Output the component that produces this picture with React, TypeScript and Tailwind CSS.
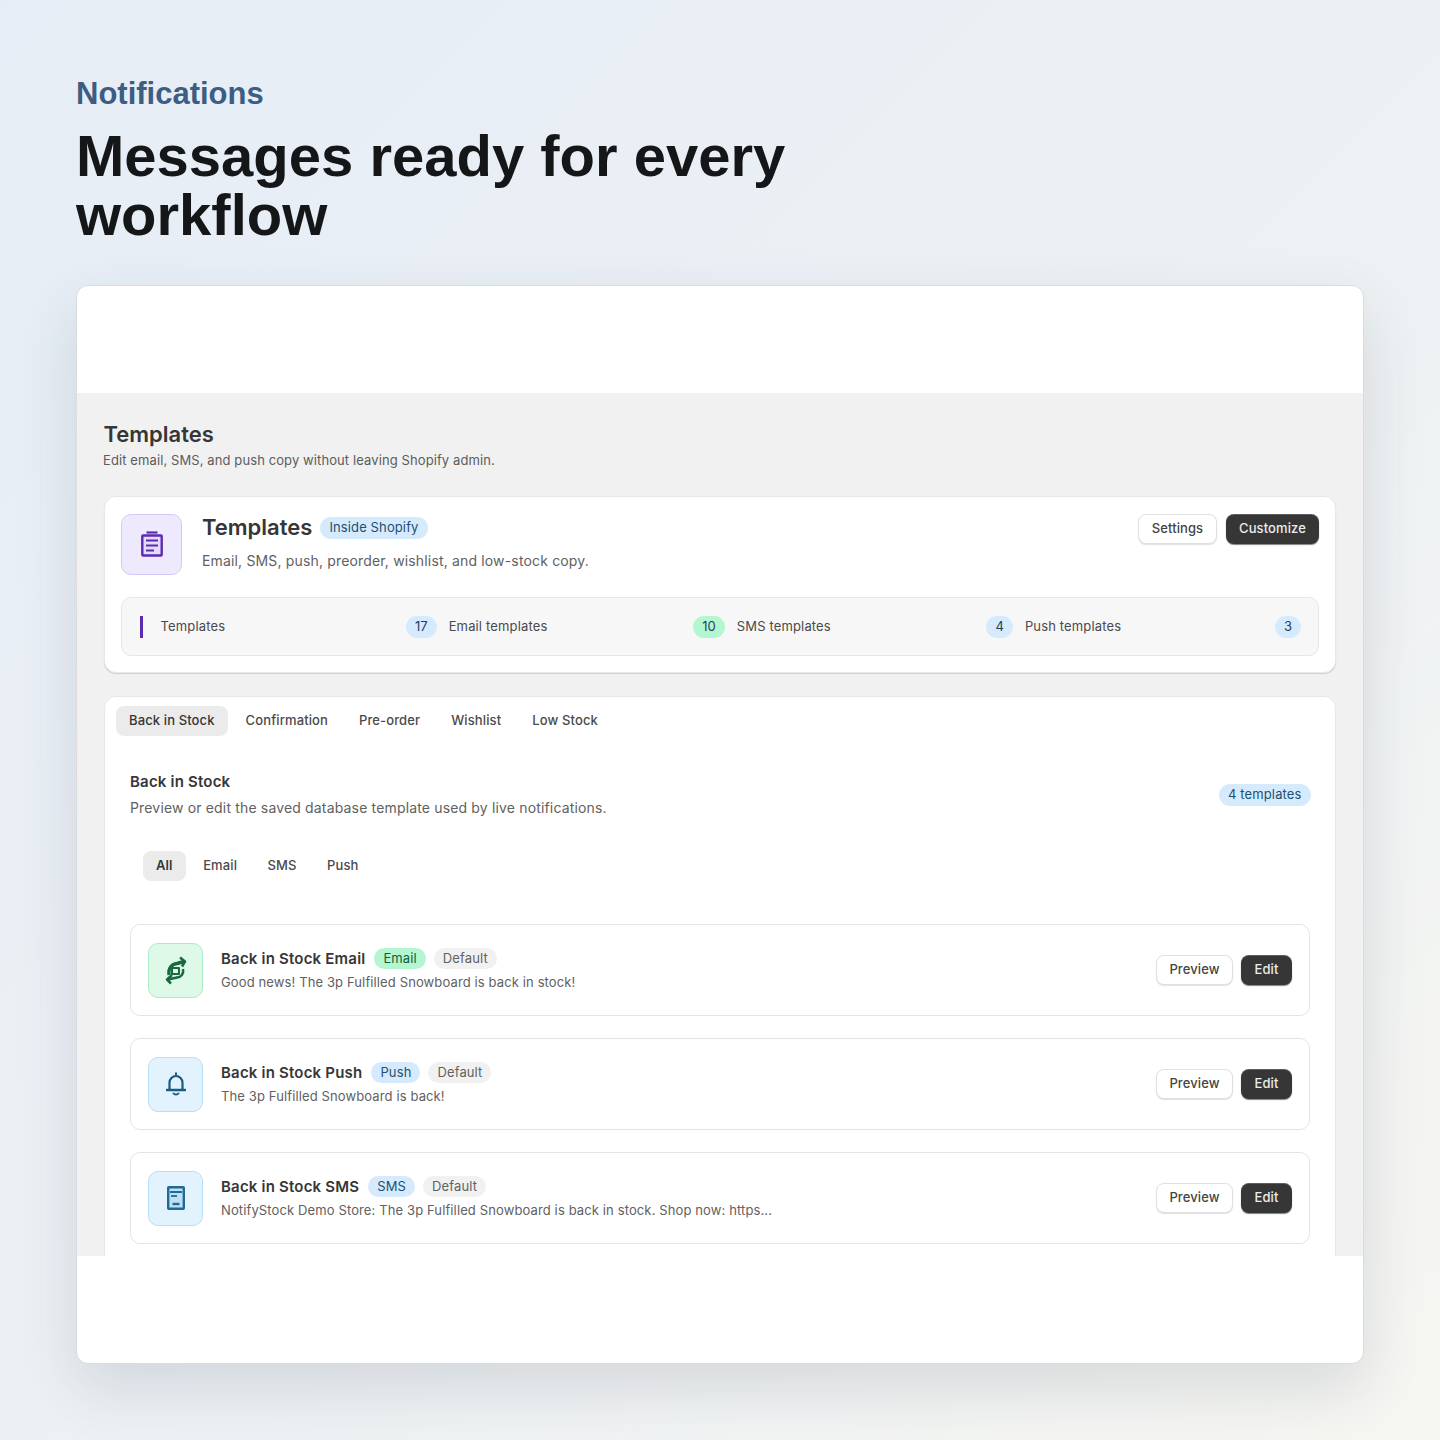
import type { ReactNode } from "react";

const inter = "font-['Inter',sans-serif]";

function ClipboardIcon() {
  return (
    <svg className="-mt-[2px]" width="22" height="26" viewBox="0 0 22 26" fill="none">
      <path d="M5.500 1.500h11" stroke="#5b2cb0" strokeWidth="2.200" />
      <rect x="1.300" y="4.500" width="19.400" height="20" rx="0.800" fill="#e6dafb" stroke="#5b2cb0" strokeWidth="2.400" />
      <path d="M5 9.500h12M5 14.500h12M5 19.500h8" stroke="#5b2cb0" strokeWidth="2.200" />
    </svg>
  );
}

function ArrowsIcon() {
  return (
    <svg width="34" height="36" viewBox="0 0 34 36" fill="none" stroke="#17693f" strokeWidth="2.500" strokeLinejoin="round">
      <path d="M10 23C9 16 13 12 18 11.500L25 9.500" strokeWidth="3.400" />
      <path d="M21 5.500L26 9.500L23 14.500" />
      <path d="M24 17C25 22 22 25 18 25.500L9 27.500" />
      <path d="M13 23L8 27.500L12 31.500" />
      <path d="M13 16h7v6h-7z" strokeWidth="2" />
    </svg>
  );
}

function BellIcon() {
  return (
    <svg width="20" height="24" viewBox="0 0 20 24" fill="none" stroke="#1d5a80" strokeWidth="2.200" strokeLinejoin="round">
      <path d="M10 .5v3" strokeWidth="2" />
      <path d="M3.500 17.500v-7a6.500 6.500 0 0 1 13 0v7" />
      <path d="M1 18h18" strokeWidth="2.600" strokeLinecap="round" />
      <path d="M7.500 21.500c1 1.300 4 1.300 5 0" strokeWidth="2" strokeLinecap="round" />
    </svg>
  );
}

function DocIcon() {
  return (
    <svg width="18" height="24" viewBox="0 0 18 24" fill="none">
      <rect x="1.200" y="1.200" width="15.600" height="21.600" rx="0.600" fill="#bfe0f3" stroke="#1f6a96" strokeWidth="2.400" />
      <path d="M3 6h12" stroke="#1f6a96" strokeWidth="2" />
      <path d="M4 10h6" stroke="#1f6a96" strokeWidth="1.800" />
      <path d="M5.500 18h7" stroke="#1f6a96" strokeWidth="2.400" />
    </svg>
  );
}

function Pill({ className, children }: { className: string; children: ReactNode }) {
  return <span className={`inline-flex items-center rounded-full tracking-[0.12px] ${className}`}>{children}</span>;
}

function Stat({ label, count, tone }: { label: string; count: string; tone: string }) {
  return (
    <div className="flex min-w-0 items-center">
      <span className="text-[13px] tracking-[0.15px] text-[#4a4a4a]">{label}</span>
      <span className={`ml-auto flex h-[22px] items-center rounded-full px-[9px] text-[13px] text-[#1d3f5c] ${tone}`}>{count}</span>
    </div>
  );
}

function Buttons() {
  return (
    <div className="flex items-center gap-[8px] tracking-[0.1px]">
      <button className="flex h-[30px] w-[77px] items-center justify-center rounded-[8px] border border-[#e0e0e0] bg-white text-[13px] font-medium text-[#444444] shadow-[0_1px_1px_rgba(0,0,0,0.12)]">
        Preview
      </button>
      <button className="flex h-[30px] w-[51px] items-center justify-center rounded-[8px] bg-[#363636] text-[13px] font-medium text-[#ececec] shadow-[inset_0_1px_0_rgba(255,255,255,0.2),0_1px_1px_rgba(0,0,0,0.5)]">
        Edit
      </button>
    </div>
  );
}

const rows = [
  {
    title: "Back in Stock Email",
    tag: "Email",
    tagTone: "bg-[#b4f6cf] text-[#0f5f3a]",
    text: "Good news! The 3p Fulfilled Snowboard is back in stock!",
    box: "border-[#a9edc5] bg-[#dff9e9]",
    icon: <ArrowsIcon />,
  },
  {
    title: "Back in Stock Push",
    tag: "Push",
    tagTone: "bg-[#d5ebfd] text-[#1d4f73]",
    text: "The 3p Fulfilled Snowboard is back!",
    box: "border-[#b3e0f8] bg-[#e2f3fe]",
    icon: <BellIcon />,
  },
  {
    title: "Back in Stock SMS",
    tag: "SMS",
    tagTone: "bg-[#d5ebfd] text-[#1d4f73]",
    text: "NotifyStock Demo Store: The 3p Fulfilled Snowboard is back in stock. Shop now: https...",
    box: "border-[#b3e0f8] bg-[#e2f3fe]",
    icon: <DocIcon />,
  },
];

export default function App() {
  return (
    <div className="h-[1440px] w-[1440px] overflow-hidden bg-[linear-gradient(135deg,#e6edf6_0%,#edf1f4_55%,#f6f6f2_100%)] px-[76px] pt-[75px]">
      <p className="font-['Liberation_Sans',sans-serif] text-[31px] leading-[38px] font-bold text-[#3d5d82]">Notifications</p>
      <h1 className="mt-[13px] w-[800px] font-['Liberation_Sans',sans-serif] text-[58px] leading-[59px] font-bold text-[#151618]">
        Messages ready for every workflow
      </h1>

      <div className={`mt-[41px] flex h-[1079px] w-[1288px] flex-col overflow-hidden rounded-[12px] border border-[#d9dce0] bg-white shadow-[0_24px_60px_rgba(40,55,75,0.14)] ${inter}`}>
        <div className="h-[107px] shrink-0" />
        <div className="flex h-[863px] shrink-0 flex-col overflow-hidden bg-[#f1f1f1] px-[27px] pt-[26px]">
          <h2 className="-ml-[0.5px] text-[22px] leading-[30px] font-semibold text-[#363636]">Templates</h2>
          <p className="-ml-[1px] mt-[1px] text-[13px] leading-[20px] tracking-[0.1px] text-[#5c5c5c]">Edit email, SMS, and push copy without leaving Shopify admin.</p>

          <section className="mt-[26px] h-[177px] shrink-0 rounded-[12px] border border-[#e8e8e8] bg-white px-[16px] pt-[17px] shadow-[0_1px_1px_rgba(0,0,0,0.14)]">
            <div className="flex items-start">
              <div className="flex h-[61px] w-[61px] shrink-0 items-center justify-center rounded-[10px] border border-[#d7c6fa] bg-[#efe9fe]">
                <ClipboardIcon />
              </div>
              <div className="ml-[20px] flex-1">
                <div className="flex items-center gap-[8px]">
                  <span className="text-[22px] leading-[27px] font-semibold text-[#363636]">Templates</span>
                  <Pill className="h-[22px] bg-[#d5ebfd] px-[9px] text-[13px] text-[#1d4f73]">Inside Shopify</Pill>
                </div>
                <p className="mt-[9px] text-[14px] leading-[22px] tracking-[0.16px] text-[#616161]">Email, SMS, push, preorder, wishlist, and low-stock copy.</p>
              </div>
              <div className="flex items-center gap-[9px] tracking-[0.1px]">
                <button className="flex h-[30px] w-[79px] items-center justify-center rounded-[8px] border border-[#e0e0e0] bg-white text-[13px] font-medium text-[#444444] shadow-[0_1px_1px_rgba(0,0,0,0.12)]">
                  Settings
                </button>
                <button className="flex h-[30px] w-[93px] items-center justify-center rounded-[8px] bg-[#363636] text-[13px] font-medium text-[#ececec] shadow-[inset_0_1px_0_rgba(255,255,255,0.2),0_1px_1px_rgba(0,0,0,0.5)]">
                  Customize
                </button>
              </div>
            </div>
            <div className="mt-[22px] flex h-[59px] items-center rounded-[10px] border border-[#e6e6e6] bg-[#f7f7f7] pr-[17px] pl-[18px]">
              <span className="mr-[17.500px] h-[22px] w-[3px] shrink-0 bg-[#5b2cb0]" />
              <div className="grid flex-1 grid-cols-4 items-center gap-x-[12px]">
                <Stat label="Templates" count="17" tone="bg-[#d5ebfd]" />
                <Stat label="Email templates" count="10" tone="bg-[#b4f6cf]" />
                <Stat label="SMS templates" count="4" tone="bg-[#d5ebfd]" />
                <Stat label="Push templates" count="3" tone="bg-[#d5ebfd]" />
              </div>
            </div>
          </section>

          <section className="mt-[23px] h-[620px] shrink-0 rounded-[12px] border border-[#e8e8e8] bg-white px-[11px] pt-[9px]">
            <div className="flex items-center gap-[5px] text-[13px] font-medium tracking-[0.12px] text-[#4a4a4a]">
              <span className="flex h-[30px] items-center rounded-[8px] bg-[#ebebeb] px-[13px] text-[#363636]">Back in Stock</span>
              <span className="px-[13px]">Confirmation</span>
              <span className="px-[13px]">Pre-order</span>
              <span className="px-[13px]">Wishlist</span>
              <span className="px-[13px]">Low Stock</span>
            </div>

            <div className="px-[14px]">
              <div className="mt-[35px] flex items-center justify-between">
                <div>
                  <h3 className="text-[15px] leading-[22px] font-semibold tracking-[0.2px] text-[#363636]">Back in Stock</h3>
                  <p className="mt-[4px] text-[14px] leading-[22px] tracking-[0.16px] text-[#616161]">Preview or edit the saved database template used by live notifications.</p>
                </div>
                <Pill className="-mr-[1px] h-[22px] bg-[#d5ebfd] px-[9.500px] text-[13px] text-[#1d4f73]">4 templates</Pill>
              </div>

              <div className="mt-[32px] ml-[13px] flex items-center gap-[4.500px] text-[13px] font-medium tracking-[0.12px] text-[#4a4a4a]">
                <span className="flex h-[30px] items-center rounded-[8px] bg-[#ebebeb] px-[13px] font-semibold text-[#363636]">All</span>
                <span className="px-[13px]">Email</span>
                <span className="px-[13px]">SMS</span>
                <span className="px-[13px]">Push</span>
              </div>

              <div className="mt-[43px] flex flex-col gap-[22px]">
                {rows.map((r) => (
                  <div key={r.title} className="flex h-[92px] items-center rounded-[10px] border border-[#e4e4e4] bg-white px-[17px]">
                    <div className={`flex h-[55px] w-[55px] shrink-0 items-center justify-center rounded-[10px] border ${r.box}`}>{r.icon}</div>
                    <div className="ml-[18px] flex-1">
                      <div className="flex items-center gap-[9px]">
                        <span className="text-[15px] leading-[22px] font-semibold tracking-[0.2px] text-[#363636]">{r.title}</span>
                        <Pill className={`h-[21px] px-[9px] text-[13px] ${r.tagTone}`}>{r.tag}</Pill>
                        <Pill className="h-[21px] -ml-[1px] bg-[#f1f1f1] px-[9px] text-[13px] text-[#616161]">Default</Pill>
                      </div>
                      <p className="mt-[1px] text-[13px] leading-[22px] tracking-[0.12px] text-[#616161]">{r.text}</p>
                    </div>
                    <Buttons />
                  </div>
                ))}
              </div>
            </div>
          </section>
        </div>
        <div className="flex-1" />
      </div>
    </div>
  );
}
